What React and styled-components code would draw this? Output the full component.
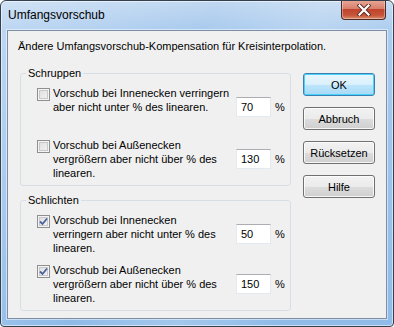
import React from 'react';
import styled, { createGlobalStyle } from 'styled-components';

const GlobalStyle = createGlobalStyle`
  html, body {
    margin: 0;
    padding: 0;
    background: #ffffff;
  }
  * {
    box-sizing: border-box;
  }
`;

const Window = styled.div`
  width: 394px;
  height: 327px;
  display: flex;
  flex-direction: column;
  border: 1px solid #34404e;
  border-radius: 6px 6px 4px 4px;
  background:
    linear-gradient(115deg, rgba(255, 255, 255, 0.25) 0%, rgba(255, 255, 255, 0) 40%, rgba(255, 255, 255, 0.18) 60%, rgba(255, 255, 255, 0) 80%),
    linear-gradient(180deg, #c0d8f1 0%, #a8caee 30px, #8fbbe8 100%);
  box-shadow: inset 0 0 0 1px rgba(255, 255, 255, 0.55);
  font-family: "Liberation Sans", Arial, sans-serif;
  overflow: hidden;
`;

const TitleBar = styled.div`
  height: 29px;
  display: flex;
  align-items: flex-start;
  padding-left: 7px;
  padding-right: 7px;
`;

const Title = styled.div`
  font-size: 12px;
  line-height: 15px;
  margin-top: 7px;
  color: #000;
`;

const CloseButton = styled.div`
  margin-left: auto;
  margin-top: -1px;
  width: 45px;
  height: 20px;
  display: flex;
  align-items: center;
  justify-content: center;
  border: 1px solid #4e2a24;
  border-top: none;
  border-radius: 0 0 4px 4px;
  background: linear-gradient(180deg, #e9a898 0%, #d8806c 45%, #c0442e 50%, #c65438 80%, #dc8c6c 100%);
  box-shadow: inset 0 0 0 1px rgba(255, 255, 255, 0.35);
`;

const Client = styled.div`
  flex: 1;
  margin: 0 6px 7px 6px;
  border: 1px solid #7b8ea6;
  background: #f0f0f0;
  box-shadow: 0 0 0 1px rgba(255, 255, 255, 0.5);
  padding-top: 9px;
`;

const Intro = styled.div`
  font-size: 11px;
  line-height: 13px;
  padding-left: 10px;
  color: #000;
`;

const Body = styled.div`
  display: flex;
  align-items: flex-start;
  margin-top: 14px;
  padding-left: 12px;
`;

const Groups = styled.div`
  width: 271px;
  display: flex;
  flex-direction: column;
  gap: 8px;
`;

const Group = styled.fieldset`
  margin: 0;
  padding: 0;
  border: 1px solid #d5dfe5;
  border-radius: 3px;
  min-width: 0;
`;

const Legend = styled.legend`
  margin-left: 5px;
  padding: 0 2px;
  font-size: 11px;
  line-height: 13px;
  color: #000;
`;

const Rows = styled.div`
  display: flex;
  flex-direction: column;
  gap: ${p => p.$gap}px;
  padding: 6px 0 5px 16px;
`;

const Row = styled.div`
  display: grid;
  grid-template-columns: 13px 180px 35px auto;
  column-gap: 3px;
  align-items: start;
`;

const Box = styled.div`
  width: 13px;
  height: 13px;
  margin-top: 2px;
  border: 1px solid #8e8f8f;
  background: linear-gradient(135deg, #dcdcdc 0%, #f5f5f5 100%);
  box-shadow: inset 0 0 0 1px #f4f4f4, inset 0 0 0 2px #c8c8c8;
  display: flex;
  align-items: center;
  justify-content: center;
`;

const Label = styled.div`
  font-size: 11px;
  line-height: 14px;
  color: #000;
  white-space: nowrap;
`;

const Field = styled.div`
  width: 35px;
  height: 20px;
  margin-top: 11px;
  border: 1px solid #e3e9ef;
  border-top-color: #abadb3;
  background: #fff;
  font-size: 11px;
  line-height: 18px;
  padding-left: 4px;
  color: #000;
`;

const Unit = styled.div`
  margin-top: 11px;
  margin-left: 1px;
  font-size: 11px;
  line-height: 20px;
  color: #000;
`;

const Buttons = styled.div`
  display: flex;
  flex-direction: column;
  gap: 11px;
  margin-left: 12px;
  padding-top: 6px;
`;

const Button = styled.div`
  width: 72px;
  height: 23px;
  display: flex;
  align-items: center;
  justify-content: center;
  font-size: 11px;
  color: #000;
  border: 1px solid ${p => (p.$default ? '#3c7fb1' : '#707070')};
  border-radius: 3px;
  background: ${p =>
    p.$default
      ? 'linear-gradient(180deg, #eaf6fd 0%, #d9f0fc 50%, #bee6fd 51%, #a7d9f5 100%)'
      : 'linear-gradient(180deg, #f2f2f2 0%, #ebebeb 50%, #dddddd 51%, #cfcfcf 100%)'};
  box-shadow: inset 0 0 0 1px ${p => (p.$default ? '#48d3fb' : 'rgba(255, 255, 255, 0.8)')};
`;

const CheckMark = () => (
  <svg width="9" height="9" viewBox="0 0 9 9">
    <path d="M1 4.5 L3.5 7 L8 1.5" fill="none" stroke="#4a61a0" strokeWidth="1.8" />
  </svg>
);

const CloseIcon = () => (
  <svg width="14" height="12" viewBox="0 0 14 12">
    <path d="M2.5 1.5 L11.5 10.5 M11.5 1.5 L2.5 10.5" stroke="#5b2a22" strokeWidth="4" strokeLinecap="square" />
    <path d="M2.5 1.5 L11.5 10.5 M11.5 1.5 L2.5 10.5" stroke="#ffffff" strokeWidth="2.2" strokeLinecap="square" />
  </svg>
);

const OptionRow = ({ checked, lines, value }) => (
  <Row>
    <Box>{checked && <CheckMark />}</Box>
    <Label>
      {lines.map((l, i) => (
        <React.Fragment key={i}>
          {i > 0 && <br />}
          {l}
        </React.Fragment>
      ))}
    </Label>
    <Field>{value}</Field>
    <Unit>%</Unit>
  </Row>
);

const innerLines = ['Vorschub bei Innenecken verringern', 'aber nicht unter % des linearen.'];
const outerLines = ['Vorschub bei Außenecken', 'vergrößern aber nicht über % des', 'linearen.'];
const innerLines3 = ['Vorschub bei Innenecken', 'verringern aber nicht unter % des', 'linearen.'];

export default function App() {
  return (
    <>
      <GlobalStyle />
      <Window>
        <TitleBar>
          <Title>Umfangsvorschub</Title>
          <CloseButton>
            <CloseIcon />
          </CloseButton>
        </TitleBar>
        <Client>
          <Intro>Ändere Umfangsvorschub-Kompensation für Kreisinterpolation.</Intro>
          <Body>
            <Groups>
              <Group>
                <Legend>Schruppen</Legend>
                <Rows $gap={21}>
                  <OptionRow lines={innerLines} value="70" />
                  <OptionRow lines={outerLines} value="130" />
                </Rows>
              </Group>
              <Group>
                <Legend>Schlichten</Legend>
                <Rows $gap={8}>
                  <OptionRow checked lines={innerLines3} value="50" />
                  <OptionRow checked lines={outerLines} value="150" />
                </Rows>
              </Group>
            </Groups>
            <Buttons>
              <Button $default>OK</Button>
              <Button>Abbruch</Button>
              <Button>Rücksetzen</Button>
              <Button>Hilfe</Button>
            </Buttons>
          </Body>
        </Client>
      </Window>
    </>
  );
}
